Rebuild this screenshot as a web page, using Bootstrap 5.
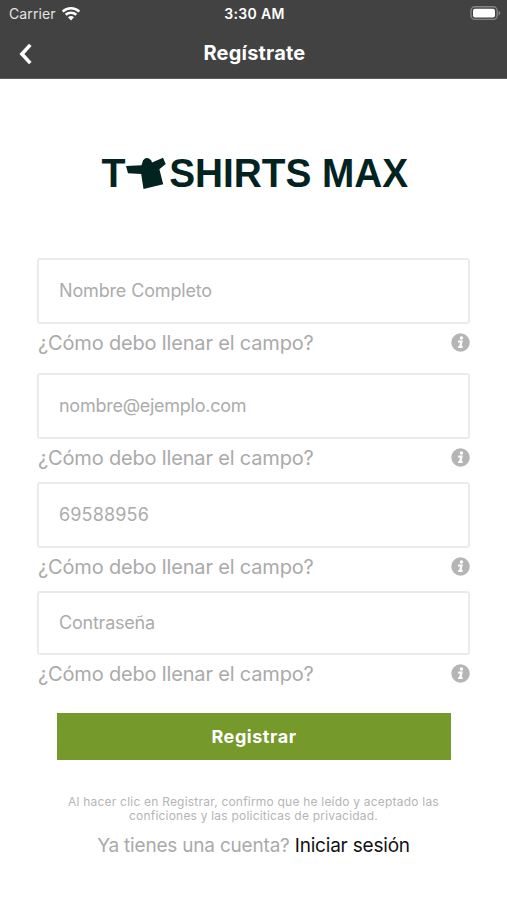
<!DOCTYPE html>
<html lang="es">
<head>
<meta charset="utf-8">
<meta name="viewport" content="width=device-width, initial-scale=1">
<title>Regístrate</title>
<link href="https://cdn.jsdelivr.net/npm/bootstrap@5.3.0/dist/css/bootstrap.min.css" rel="stylesheet">
<style>
body { font-family: Inter, "Liberation Sans", sans-serif; background: #fff; color: #aaa; }
.app-header { background: #424242; height: 79px; border-bottom: 1px solid #5e5e5e; }
.status-row { height: 27px; padding: 0 6px 0 9px; font-size: 14px; letter-spacing: .1px; color: #e4e4e4; }
.status-side { width: 90px; gap: 5px; }
.status-time { color: #fff; font-weight: 600; font-size: 14px; letter-spacing: .35px; padding-right: 1px; }
.title-row { height: 51px; padding: 2px 19px 0; }
.title-row h1 { font-size: 20px; font-weight: 700; letter-spacing: .2px; line-height: 24px; padding-right: 11px; padding-bottom: 1px; }
.logo-area { height: 179px; padding-top: 62px; }
.signup { padding: 0 37px; }
.field-input.form-control { height: 66px; border: 2px solid #ebebeb; border-radius: 3px; padding: 0 20px 2px; font-size: 18px; letter-spacing: -.15px; color: #555; }
.field-input.form-control::placeholder { color: #acacac; opacity: 1; }
.field-input[type="email"] { letter-spacing: -.26px; }
.field-input[type="tel"] { letter-spacing: .15px; }
.field-input.form-control[type="password"] { height: 64px; letter-spacing: -.22px; }
.field-help { height: 37px; font-size: 20px; letter-spacing: -.17px; color: #aaa; padding-left: 1px; white-space: nowrap; }
.gap-first { margin-bottom: 12px; }
.gap-next { margin-bottom: 6px; }
.submit-btn.btn { width: 394px; height: 47px; margin: 21px 0 0 20px; padding-top: 6px; background: #75992a; color: #fff; border: 0; border-radius: 0; font-size: 18px; font-weight: 700; letter-spacing: .55px; }
.legal { font-size: 12px; line-height: 14px; letter-spacing: .21px; color: #b5b5b5; margin-top: 35px; white-space: nowrap; }
.login-line { font-size: 19px; line-height: 24px; letter-spacing: -.2px; margin-top: 11px; color: #aaa; white-space: nowrap; }
.login-line a { color: #111; }
</style>
<script src="https://cdn.jsdelivr.net/npm/bootstrap@5.3.0/dist/js/bootstrap.bundle.min.js" defer></script>
</head>
<body class="overflow-hidden">
<header class="app-header">
  <div class="status-row d-flex align-items-center justify-content-between">
    <div class="status-side d-flex align-items-center">
      <span>Carrier</span>
      <svg width="20" height="16" viewBox="0 0 20 16" fill="none" stroke="#fff" stroke-width="2.6"><path d="M1.7 5.6a12 12 0 0 1 16.6 0M4.7 8.8a7.7 7.7 0 0 1 10.6 0"/><path d="M10 14.4 7 11.3a4.4 4.4 0 0 1 6 0z" fill="#fff" stroke="none"/></svg>
    </div>
    <span class="status-time">3:30 AM</span>
    <div class="status-side d-flex justify-content-end">
      <svg width="31" height="15" viewBox="0 0 31 15"><rect x="1" y=".8" width="26.2" height="12.6" rx="4" fill="none" stroke="#858585" stroke-width="1.4"/><rect x="3" y="2.7" width="22" height="8.8" rx="2" fill="#fff"/><path d="M28.6 4.8v4.6q1.7-.7 1.7-2.3T28.6 4.8" fill="#858585"/></svg>
    </div>
  </div>
  <div class="title-row d-flex align-items-center">
    <svg width="13" height="22" viewBox="0 0 13 22" fill="none" stroke="#fff" stroke-width="3.6"><path d="M11.3 1.9 2.9 11l8.4 9.1"/></svg>
    <h1 class="flex-grow-1 text-center text-white mb-0">Regístrate</h1>
  </div>
</header>

<main>
  <div class="logo-area d-flex justify-content-center">
    <svg width="340" height="64" viewBox="84 141 340 64" fill="#02231f" font-family="Liberation Sans, Arial, sans-serif" font-weight="700" font-size="40.5" role="img">
      <text x="101.5" y="187.3" textLength="24" lengthAdjust="spacingAndGlyphs">T</text>
      <path d="M126 166 141.5 165.3 143 160.4Q146.7 155.7 151.3 160.5L152 162.5 163 157.8 165.7 164 159.4 169.2 163.2 184.3 143.5 189 141.2 174 128 173.2Z"/>
      <text x="169.2" y="187.3" textLength="239" lengthAdjust="spacingAndGlyphs">SHIRTS MAX</text>
    </svg>
  </div>

  <svg class="d-none">
    <symbol id="info" viewBox="0 0 20 20"><circle cx="10" cy="10" r="9.7" fill="#b5b5b5"/><circle cx="11" cy="5.2" r="1.8" fill="#fff"/><path d="M7.6 8h4.9l-1.4 5.8h1.3l-.4 2H7.3l.4-2h.9l.9-3.8H7.2z" fill="#fff"/></symbol>
  </svg>

  <form class="signup">
    <div class="gap-first">
      <input class="form-control field-input" type="text" placeholder="Nombre Completo">
      <div class="field-help d-flex align-items-center justify-content-between"><span>¿Cómo debo llenar el campo?</span><svg width="19" height="19"><use href="#info"/></svg></div>
    </div>
    <div class="gap-next">
      <input class="form-control field-input" type="email" placeholder="nombre@ejemplo.com">
      <div class="field-help d-flex align-items-center justify-content-between"><span>¿Cómo debo llenar el campo?</span><svg width="19" height="19"><use href="#info"/></svg></div>
    </div>
    <div class="gap-next">
      <input class="form-control field-input" type="tel" placeholder="69588956">
      <div class="field-help d-flex align-items-center justify-content-between"><span>¿Cómo debo llenar el campo?</span><svg width="19" height="19"><use href="#info"/></svg></div>
    </div>
    <div>
      <input class="form-control field-input" type="password" placeholder="Contraseña">
      <div class="field-help d-flex align-items-center justify-content-between"><span>¿Cómo debo llenar el campo?</span><svg width="19" height="19"><use href="#info"/></svg></div>
    </div>
    <button class="btn submit-btn" type="button">Registrar</button>
    <p class="legal text-center mb-0">Al hacer clic en Registrar, confirmo que he leído y aceptado las<br>conficiones y las policiticas de privacidad.</p>
    <p class="login-line text-center mb-0">Ya tienes una cuenta? <a href="#" class="text-decoration-none">Iniciar sesión</a></p>
  </form>
</main>
</body>
</html>
